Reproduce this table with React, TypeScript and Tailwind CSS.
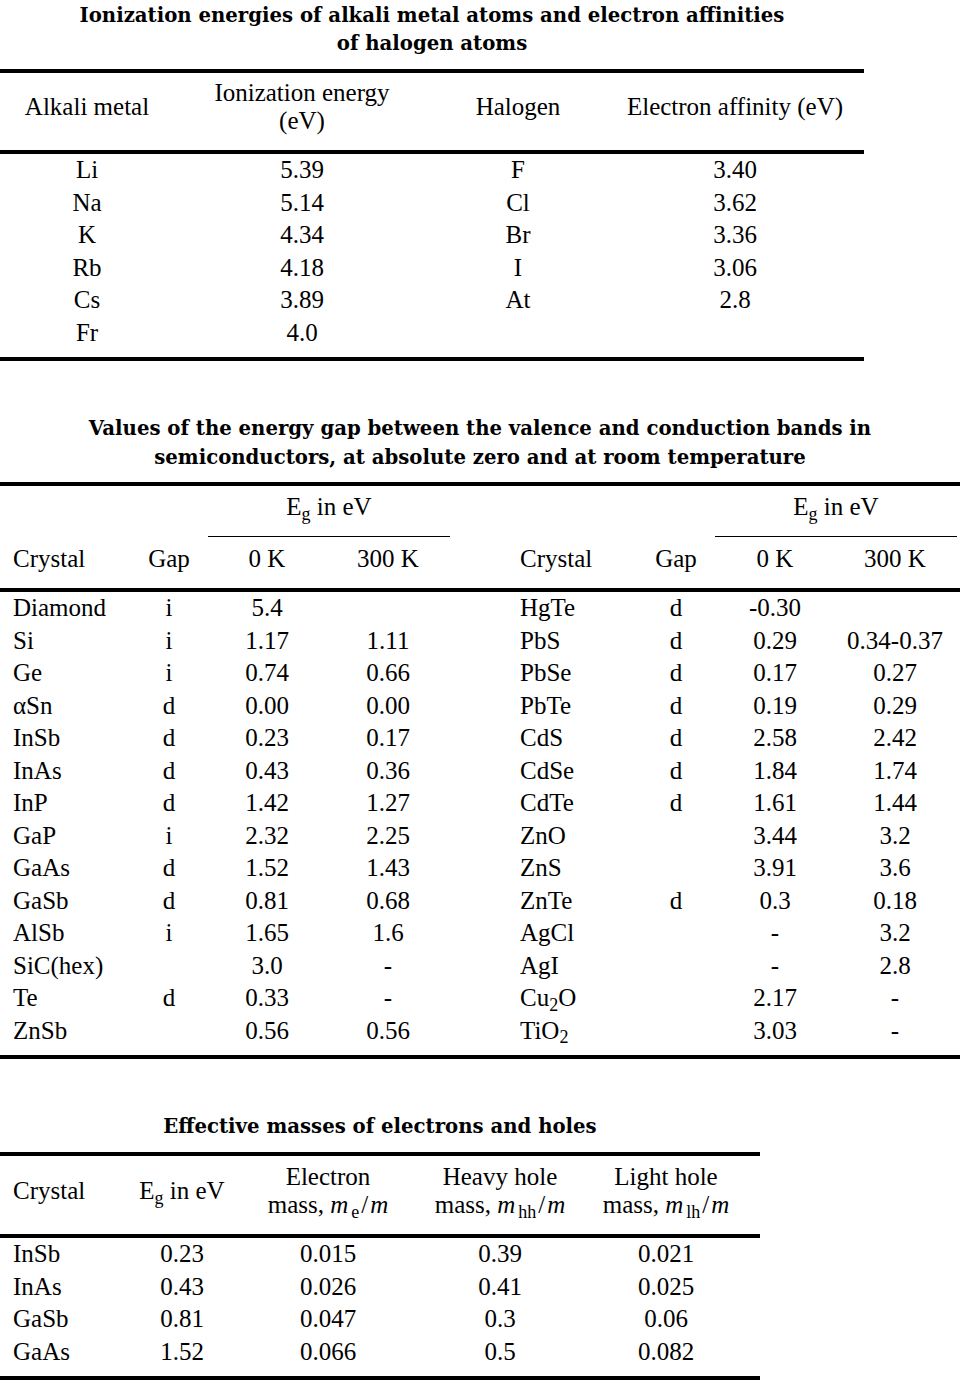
import React from "react";

const Rule = ({ className = "" }: { className?: string }) => (
  <div className={`h-[4px] bg-black ${className}`} />
);

const Title = ({ children, className = "" }: { children: React.ReactNode; className?: string }) => (
  <h2 className={`font-['DejaVu_Serif',serif] font-bold text-[19.7px] leading-[28px] text-center text-black ${className}`}>
    {children}
  </h2>
);

const Eg = () => (
  <span>
    E<sub className="text-[18px]">g</sub> in eV
  </span>
);

const alkali = [
  ["Li", "5.39", "F", "3.40"],
  ["Na", "5.14", "Cl", "3.62"],
  ["K", "4.34", "Br", "3.36"],
  ["Rb", "4.18", "I", "3.06"],
  ["Cs", "3.89", "At", "2.8"],
  ["Fr", "4.0", "", ""],
];

type Cell = React.ReactNode;

const gaps: Cell[][] = [
  ["Diamond", "i", "5.4", "", "HgTe", "d", "-0.30", ""],
  ["Si", "i", "1.17", "1.11", "PbS", "d", "0.29", "0.34-0.37"],
  ["Ge", "i", "0.74", "0.66", "PbSe", "d", "0.17", "0.27"],
  ["αSn", "d", "0.00", "0.00", "PbTe", "d", "0.19", "0.29"],
  ["InSb", "d", "0.23", "0.17", "CdS", "d", "2.58", "2.42"],
  ["InAs", "d", "0.43", "0.36", "CdSe", "d", "1.84", "1.74"],
  ["InP", "d", "1.42", "1.27", "CdTe", "d", "1.61", "1.44"],
  ["GaP", "i", "2.32", "2.25", "ZnO", "", "3.44", "3.2"],
  ["GaAs", "d", "1.52", "1.43", "ZnS", "", "3.91", "3.6"],
  ["GaSb", "d", "0.81", "0.68", "ZnTe", "d", "0.3", "0.18"],
  ["AlSb", "i", "1.65", "1.6", "AgCl", "", "-", "3.2"],
  ["SiC(hex)", "", "3.0", "-", "AgI", "", "-", "2.8"],
  ["Te", "d", "0.33", "-", <span>Cu<sub className="text-[18px]">2</sub>O</span>, "", "2.17", "-"],
  ["ZnSb", "", "0.56", "0.56", <span>TiO<sub className="text-[18px]">2</sub></span>, "", "3.03", "-"],
];

const masses = [
  ["InSb", "0.23", "0.015", "0.39", "0.021"],
  ["InAs", "0.43", "0.026", "0.41", "0.025"],
  ["GaSb", "0.81", "0.047", "0.3", "0.06"],
  ["GaAs", "1.52", "0.066", "0.5", "0.082"],
];

const Mass = ({ sub }: { sub: string }) => (
  <span>
    mass, <i>m</i>
    <sub className="text-[18px] ml-[3px]">{sub}</sub>
    <span className="mx-[2px]">/</span>
    <i>m</i>
  </span>
);

export default function App() {
  return (
    <div className="w-[960px] h-[1381px] bg-white text-black font-['Liberation_Serif',serif] text-[25px] overflow-hidden">
      {/* table 1 */}
      <section className="w-[864px]">
        <Title className="pt-[2px]">
          Ionization energies of alkali metal atoms and electron affinities
          <br />
          of halogen atoms
        </Title>
        <Rule className="mt-[11px]" />
        <div className="grid grid-cols-[174px_256px_176px_258px] pt-[6px] pb-[15px] leading-[28px] text-center">
          <div className="flex items-center justify-center">Alkali metal</div>
          <div>
            Ionization energy
            <br />
            (eV)
          </div>
          <div className="flex items-center justify-center">Halogen</div>
          <div className="flex items-center justify-center">Electron affinity (eV)</div>
        </div>
        <Rule />
        <div className="pb-[8px]">
          {alkali.map((r, i) => (
            <div key={i} className="grid grid-cols-[174px_256px_176px_258px] h-[32.5px] leading-[32.5px] text-center">
              {r.map((c, j) => (
                <div key={j}>{c}</div>
              ))}
            </div>
          ))}
        </div>
        <Rule />
      </section>

      {/* table 2 */}
      <section className="w-[960px] mt-[52px]">
        <Title className="leading-[29px] pt-[1px]">
          Values of the energy gap between the valence and conduction bands in
          <br />
          semiconductors, at absolute zero and at room temperature
        </Title>
        <Rule className="mt-[10px]" />
        <div className="flex h-[51px]">
          <div className="w-[208px]" />
          <div className="w-[242px] pt-[7px] text-center leading-[28px] border-b border-black">
            <Eg />
          </div>
          <div className="w-[265px]" />
          <div className="w-[242px] pt-[7px] text-center leading-[28px] border-b border-black">
            <Eg />
          </div>
        </div>
        <div className="grid grid-cols-[140px_58px_138px_104px_200px_72px_126px_114px] pt-[8px] pb-[15px] leading-[28px] text-center">
          <div className="text-left pl-[13px]">Crystal</div>
          <div>Gap</div>
          <div>0 K</div>
          <div>300 K</div>
          <div className="text-left pl-[80px]">Crystal</div>
          <div>Gap</div>
          <div>0 K</div>
          <div>300 K</div>
        </div>
        <Rule />
        <div className="pb-[8px]">
          {gaps.map((r, i) => (
            <div
              key={i}
              className="grid grid-cols-[140px_58px_138px_104px_200px_72px_126px_114px] h-[32.5px] leading-[32.5px] text-center"
            >
              {r.map((c, j) => (
                <div key={j} className={j === 0 ? "text-left pl-[13px]" : j === 4 ? "text-left pl-[80px]" : ""}>
                  {c}
                </div>
              ))}
            </div>
          ))}
        </div>
        <Rule />
      </section>

      {/* table 3 */}
      <section className="w-[760px] mt-[52px]">
        <Title className="pt-[2px]">Effective masses of electrons and holes</Title>
        <Rule className="mt-[11px]" />
        <div className="grid grid-cols-[130px_104px_188px_156px_182px] pt-[7px] pb-[15px] leading-[28px] text-center">
          <div className="flex items-center pl-[13px]">Crystal</div>
          <div className="flex items-center justify-center">
            <Eg />
          </div>
          <div>
            Electron
            <br />
            <Mass sub="e" />
          </div>
          <div>
            Heavy hole
            <br />
            <Mass sub="hh" />
          </div>
          <div className="pr-[6px]">
            Light hole
            <br />
            <Mass sub="lh" />
          </div>
        </div>
        <Rule />
        <div className="pb-[8px]">
          {masses.map((r, i) => (
            <div key={i} className="grid grid-cols-[130px_104px_188px_156px_182px] h-[32.5px] leading-[32.5px] text-center">
              {r.map((c, j) => (
                <div key={j} className={j === 0 ? "text-left pl-[13px]" : j === 4 ? "pr-[6px]" : ""}>
                  {c}
                </div>
              ))}
            </div>
          ))}
        </div>
        <Rule />
      </section>
    </div>
  );
}
